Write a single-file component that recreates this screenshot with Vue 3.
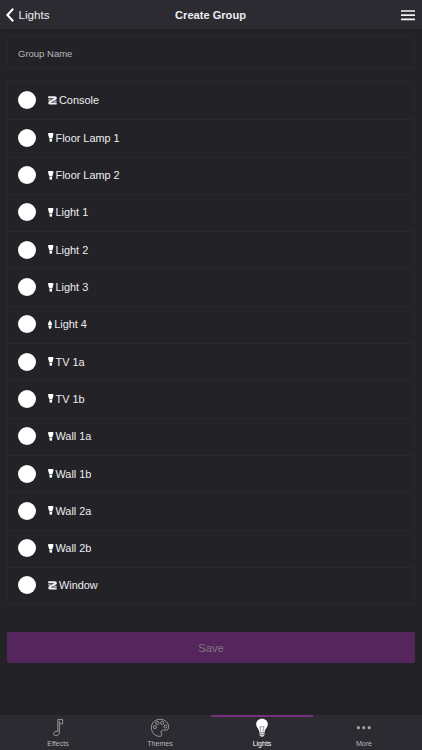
<script setup>
import { ref } from 'vue'

const lights = ref([
  { name: 'Console', type: 'strip' },
  { name: 'Floor Lamp 1', type: 'bulb' },
  { name: 'Floor Lamp 2', type: 'bulb' },
  { name: 'Light 1', type: 'bulb' },
  { name: 'Light 2', type: 'bulb' },
  { name: 'Light 3', type: 'bulb' },
  { name: 'Light 4', type: 'candle' },
  { name: 'TV 1a', type: 'bulb' },
  { name: 'TV 1b', type: 'bulb' },
  { name: 'Wall 1a', type: 'bulb' },
  { name: 'Wall 1b', type: 'bulb' },
  { name: 'Wall 2a', type: 'bulb' },
  { name: 'Wall 2b', type: 'bulb' },
  { name: 'Window', type: 'strip' },
])
const tabs = ['Effects', 'Themes', 'Lights', 'More']
</script>

<template>
  <div class="screen">
    <header class="header">
      <div class="back">
        <svg class="chevron" viewBox="0 0 8 14"><path d="M7.2 .8 1.4 7l5.8 6.2" /></svg>
        <span>Lights</span>
      </div>
      <h1 class="title">Create Group</h1>
      <svg class="menu" viewBox="0 0 14 11"><path d="M0 1h14M0 5.2h14M0 9.4h14" /></svg>
    </header>

    <main class="content">
      <div class="field">Group Name</div>
      <ul class="list">
        <li v-for="light in lights" :key="light.name" class="row">
          <span class="radio"></span>
          <svg v-if="light.type === 'strip'" class="strip" viewBox="0 0 9 9">
            <path d="M.2 1.3h6.6q2 .2.3 1.7L2 5.7Q.4 7.4 2.2 7.6h6.5" />
            <path class="thin" d="M.2 3.9h3M5.4 5.2h3.3" />
          </svg>
          <svg v-else-if="light.type === 'bulb'" class="bulb" viewBox="0 0 6 9">
            <path d="M.2 0h5.1v1.9L4.3 5.6H1.3L.2 1.9zM1.5 5.9h2.6v1.9l-.5 1H2l-.5-1z" />
          </svg>
          <svg v-else class="candle" viewBox="0 0 4 9">
            <path d="M2 0 3.9 3.2v2.4H.1V3.2zM.5 5.9h3v1.2L2.8 8.8H1.2L.5 7.1z" />
          </svg>
          <span class="name">{{ light.name }}</span>
        </li>
      </ul>
      <button class="save" disabled>Save</button>
    </main>

    <nav class="tabs">
      <div v-for="tab in tabs" :key="tab" class="tab" :class="{ active: tab === 'Lights' }">
        <svg v-if="tab === 'Effects'" class="icon" viewBox="0 0 20 20">
          <path d="M9.8 13.4V1.6h4.8v4.2h-3.2v8.6c0 2.2-1.4 3.1-3.4 3.1-1.6 0-2.5-.8-2.5-1.8 0-1.7 2.3-2.8 4.3-2.3M11.4 3v2.8" />
        </svg>
        <svg v-else-if="tab === 'Themes'" class="icon" viewBox="0 0 20 20">
          <path d="M10 1.3c-5 0-8.6 3.7-8.6 8.4 0 4.9 3.8 8.7 8.5 8.7 2.1 0 2-1.6 1.4-3-.8-2 .1-3.5 2.4-3.3 2.5.3 4.8.1 4.9-2.8.1-4.6-3.6-8-8.6-8z" />
          <circle cx="4.9" cy="9.1" r="1.5" /><circle cx="7.3" cy="5" r="1.6" />
          <circle cx="12.2" cy="4.8" r="1.6" /><circle cx="15.3" cy="8.5" r="1.5" />
        </svg>
        <svg v-else-if="tab === 'Lights'" class="icon" viewBox="0 0 20 20">
          <path class="glass" d="M10 .8C6.5.8 4.2 3.2 4.2 6.3c0 3 2.8 4.6 3.2 7.7h5.2c.4-3.1 3.2-4.7 3.2-7.7C15.8 3.2 13.5.8 10 .8z" />
          <path class="filament" d="M9 13.8 8 8.3l1.2 1L10 8.4l.9.9 1.1-1-1 5.5" />
          <path class="base" d="M7.5 14h5v3l-1.4 1.8H8.9L7.5 17z" />
          <path class="filament" d="M7.5 14.8h5M7.6 16.5h4.8" />
        </svg>
        <svg v-else class="icon dots" viewBox="0 0 20 20">
          <circle cx="4.4" cy="9.7" r="1.6" /><circle cx="9.8" cy="9.7" r="1.6" /><circle cx="15.2" cy="9.7" r="1.6" />
        </svg>
        <span class="label">{{ tab }}</span>
      </div>
    </nav>
  </div>
</template>

<style>
body { margin: 0; background: #232227; }
</style>

<style scoped>
* { box-sizing: border-box; }
.screen {
  width: 422px;
  height: 750px;
  display: flex;
  flex-direction: column;
  overflow: hidden;
  background: #232227;
  color: #ededf0;
  font-family: "Liberation Sans", Arial, sans-serif;
}
.header {
  height: 29px;
  flex: none;
  display: grid;
  grid-template-columns: 1fr auto 1fr;
  align-items: center;
  padding: 1px 7px 0 6px;
  background: #2c2b31;
}
.back { display: flex; align-items: center; gap: 4.5px; font-size: 11.6px; line-height: 14px; }
.chevron { width: 8px; height: 14px; fill: none; stroke: #fff; stroke-width: 2; }
.title { margin: 0; font-size: 11.1px; line-height: 14px; font-weight: 700; }
.menu { justify-self: end; width: 14px; height: 11px; fill: none; stroke: #f4f3f6; stroke-width: 1.7; }
.content { flex: 1; padding: 7px 7px 0; }
.field {
  height: 33px;
  padding: 1px 10px 0;
  display: flex;
  align-items: center;
  border: 1px solid #29282d;
  color: #b9b8bd;
  font-size: 9.5px;
}
.list { margin: 12px 0 0; padding: 0; list-style: none; border: 1px solid #29282d; }
.row { height: 37.31px; display: flex; align-items: center; padding: 0 0 1.2px 10px; font-size: 10.9px; }
.row + .row { border-top: 1px solid #29282d; }
.radio { width: 18px; height: 18px; margin-right: 11.5px; border-radius: 50%; background: #fff; }
.strip { width: 9px; height: 9px; margin-right: 2.5px; fill: none; stroke: #f1f0f4; stroke-width: 2; }
.strip .thin { stroke-width: 1; }
.bulb { width: 6px; height: 9px; margin-right: 2px; fill: #fff; }
.candle { width: 4px; height: 9px; margin-right: 2.7px; fill: #fff; }
.name { line-height: 14px; white-space: nowrap; }
.save {
  display: block;
  width: 100%;
  height: 31px;
  margin: 27px 0 0;
  padding: 1px 0 0;
  border: 0;
  border-radius: 2px;
  background: #55265d;
  color: #807483;
  font: 11.2px "Liberation Sans", Arial, sans-serif;
}
.tabs { height: 35px; flex: none; display: flex; padding: 0 7px; background: #2c2b31; }
.tab {
  flex: 1;
  display: flex;
  flex-direction: column;
  align-items: center;
  border-top: 2px solid transparent;
  color: #b9b8bd;
}
.active { border-top-color: #74307f; color: #fff; }
.icon { width: 20px; height: 20px; margin-top: 1px; fill: none; stroke: #a3a2a7; stroke-width: 0.9; }
.dots { fill: #a3a2a7; stroke: none; }
.glass, .base { fill: #fff; stroke: none; }
.base { fill: #d7d6da; }
.filament { stroke: #77767b; stroke-width: 0.7; }
.label { margin-top: 1px; font-size: 7px; line-height: 9px; }
</style>
